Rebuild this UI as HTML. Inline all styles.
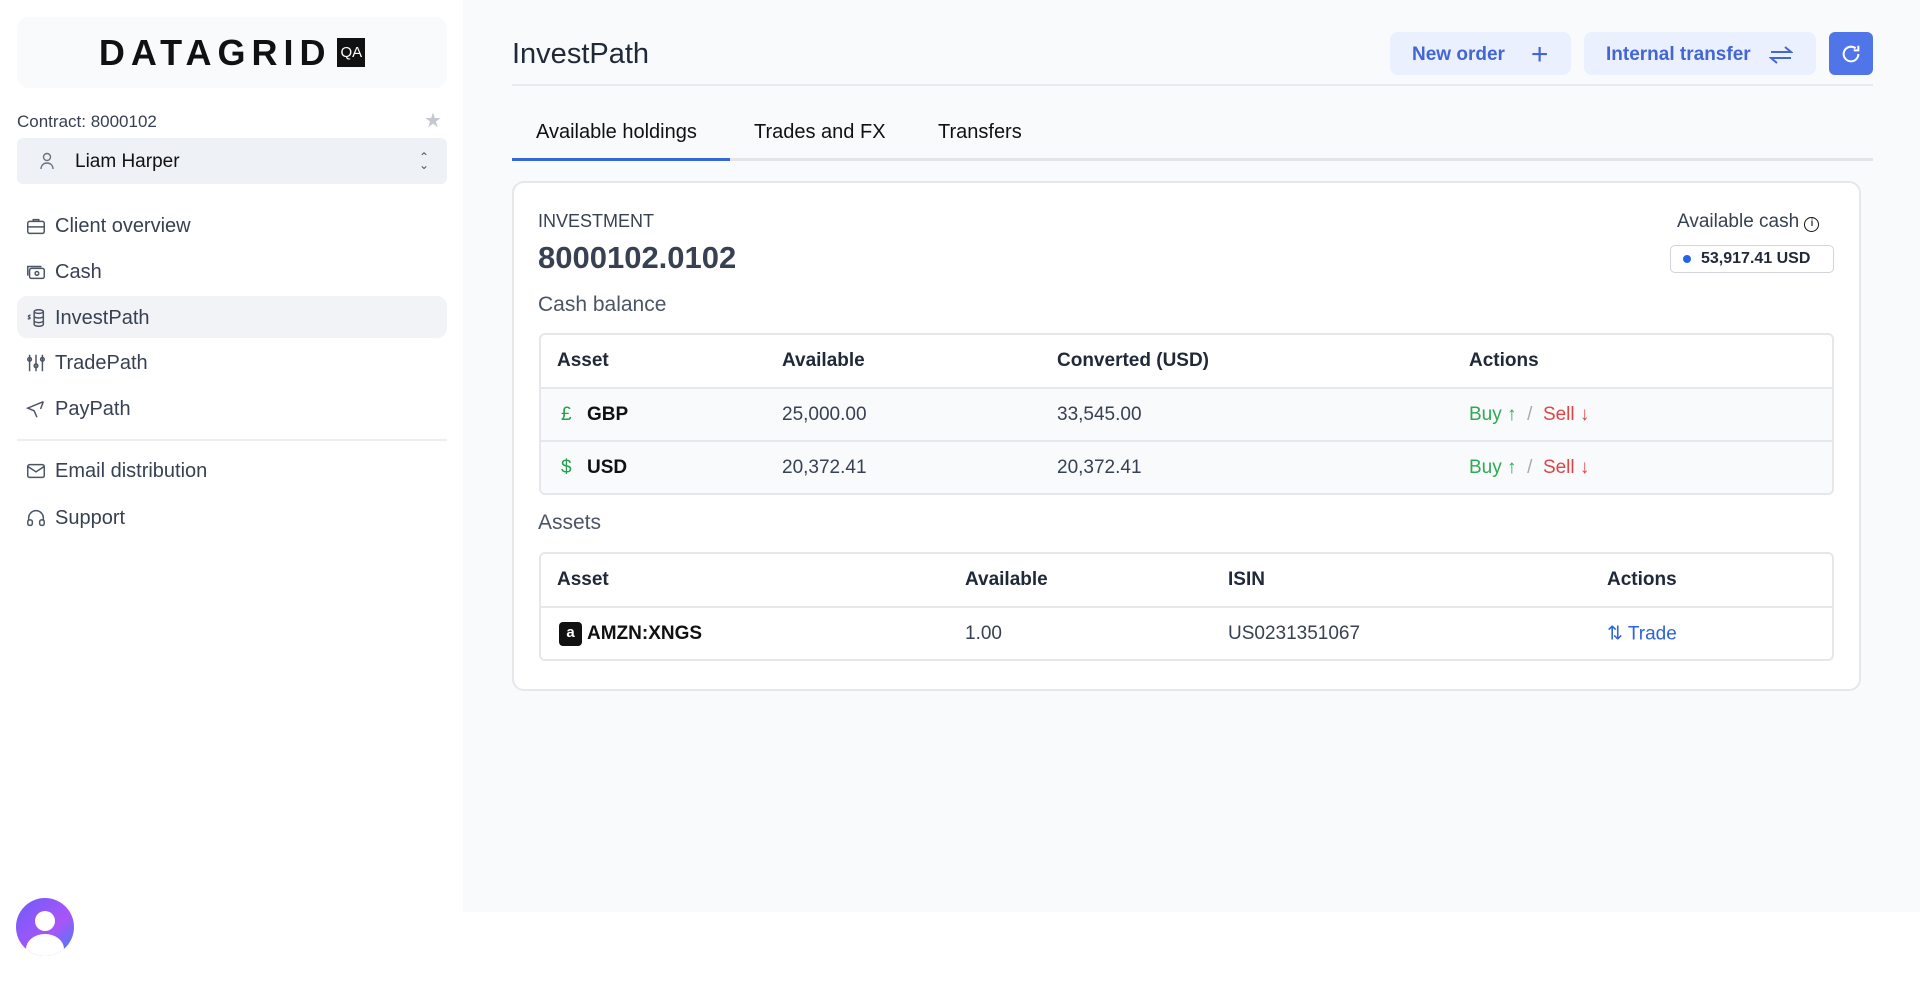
<!DOCTYPE html>
<html><head><meta charset="utf-8"><style>
*{box-sizing:border-box;margin:0;padding:0}
body{width:1920px;height:983px;font-family:"Liberation Sans",sans-serif;background:#fff;position:relative;overflow:hidden;color:#1f2937}
.side{position:absolute;left:0;top:0;width:463px;height:983px;background:#fff}
.main{position:absolute;left:463px;top:0;width:1457px;height:912px;background:#f8fafc}
.abs{position:absolute}
.logo{left:17px;top:17px;width:430px;height:71px;background:#f8fafc;border-radius:12px;display:flex;align-items:center;justify-content:center}
.logo b{font-size:36px;letter-spacing:6px;font-weight:700;color:#111}
.logo span{background:#111;color:#fff;font-size:15px;padding:6px 3px;margin-left:6px}
.nav{left:17px;width:430px;height:42px;display:flex;align-items:center;padding-left:8px;font-size:20px;color:#374151;border-radius:10px;padding-top:2px}
.nav svg{width:22px;height:22px;margin-right:8px;stroke:#4b5563;fill:none;stroke-width:1.6}
.btn{top:32px;height:43px;background:#eaf0fd;border-radius:8px;color:#4466d4;font-size:19px;font-weight:600;display:flex;align-items:center;padding-left:22px;padding-top:2px}
.card{left:512px;top:181px;width:1349px;height:510px;background:#fff;border:2px solid #e5e7eb;border-radius:12px}
.tbl{position:absolute;left:539px;width:1295px;border:2px solid #e5e7eb;border-radius:6px;overflow:hidden;background:#fff}
.row{position:relative;height:53px;border-top:2px solid #e5e7eb;font-size:19px;color:#374151}
.row.h{border-top:none;height:52px;font-weight:600;color:#1f2937}
.row span{position:absolute;top:50%;transform:translateY(-50%)}
.g{background:#f8fafc}
</style></head><body>
<div class="side">
 <div class="abs logo"><b>DATAGRID</b><span>QA</span></div>
 <div class="abs" style="left:17px;top:112px;font-size:17px;color:#374151">Contract: 8000102</div>
 <div class="abs" style="left:424px;top:108px;color:#c4c8ce;font-size:20px">★</div>
 <div class="abs" style="left:17px;top:138px;width:430px;height:46px;background:#eef1f5;border-radius:6px;display:flex;align-items:center;padding-left:22px;font-size:19px;color:#111">
  <svg width="16" height="18" viewBox="0 0 16 18" fill="none" stroke="#6b7280" stroke-width="1.4"><circle cx="8" cy="5" r="3.5"/><path d="M2 17c0-4 3-6 6-6s6 2 6 6"/></svg>
  <span style="margin-left:20px;padding-top:2px">Liam Harper</span>
  <span style="position:absolute;right:18px;color:#4b5563;font-size:12px;line-height:8px;text-align:center">⌃<br>⌄</span></div>
 <div class="abs nav" style="top:204px"><svg viewBox="0 0 24 24"><rect x="3" y="7" width="18" height="13" rx="2"/><path d="M9 7V5h6v2M3 13h18"/></svg>Client overview</div>
 <div class="abs nav" style="top:250px"><svg viewBox="0 0 24 24"><rect x="5" y="8" width="16" height="11" rx="2"/><path d="M3 16V6h15"/><circle cx="13" cy="13.5" r="2"/></svg>Cash</div>
 <div class="abs nav" style="top:296px;background:#f1f3f6"><svg viewBox="0 0 24 24"><ellipse cx="15" cy="5" rx="5" ry="2"/><path d="M10 5v14c0 1 2 2 5 2s5-1 5-2V5M10 10c0 1 2 2 5 2s5-1 5-2M10 15c0 1 2 2 5 2s5-1 5-2M6 9c-2 0-3 1-1.5 2s1.5 2-1.5 2"/></svg>InvestPath</div>
 <div class="abs nav" style="top:341px"><svg viewBox="0 0 24 24"><path d="M5 3v18M12 3v18M19 3v18"/><circle cx="5" cy="8" r="2"/><circle cx="12" cy="15" r="2"/><circle cx="19" cy="8" r="2"/></svg>TradePath</div>
 <div class="abs nav" style="top:387px"><svg viewBox="0 0 24 24"><path d="M20 4L3 11l7 3 3 7M20 4l-3 8"/></svg>PayPath</div>
 <div class="abs" style="left:17px;top:439px;width:430px;height:2px;background:#eceef1"></div>
 <div class="abs nav" style="top:449px"><svg viewBox="0 0 24 24"><rect x="3" y="5" width="18" height="14" rx="2"/><path d="M3 7l9 6 9-6"/></svg>Email distribution</div>
 <div class="abs nav" style="top:496px"><svg viewBox="0 0 24 24"><path d="M4 15v-3a8 8 0 0116 0v3"/><rect x="3" y="14" width="5" height="6" rx="2"/><rect x="16" y="14" width="5" height="6" rx="2"/></svg>Support</div>
 <div class="abs" style="left:16px;top:898px;width:58px;height:58px;border-radius:50%;background:linear-gradient(135deg,#6d5dfc,#a855f7 60%,#3b82f6);overflow:hidden">
  <div style="position:absolute;left:19px;top:13px;width:20px;height:20px;border-radius:50%;background:#fff"></div>
  <div style="position:absolute;left:10px;top:36px;width:38px;height:30px;border-radius:50%;background:#fff"></div></div>
</div>
<div class="main"></div>
<div class="abs" style="left:512px;top:38px;font-size:29px;color:#1f2937">InvestPath</div>
<div class="abs" style="left:512px;top:84px;width:1361px;height:2px;background:#e8eaee"></div>
<div class="abs btn" style="left:1390px;width:181px">New order<span style="margin-left:26px;font-size:30px;font-weight:300">+</span></div>
<div class="abs btn" style="left:1584px;width:232px">Internal transfer<svg style="margin-left:18px" width="24" height="22" viewBox="0 0 24 22" fill="none" stroke="#4466d4" stroke-width="2"><path d="M2 8h20L16 3M22 14H2l6 5"/></svg></div>
<div class="abs" style="left:1829px;top:32px;width:44px;height:43px;background:#4f75e8;border-radius:6px;display:flex;align-items:center;justify-content:center"><svg width="22" height="22" viewBox="0 0 24 24" fill="none" stroke="#fff" stroke-width="2.2"><path d="M20 12a8 8 0 11-3-6.2M20 3v5h-5"/></svg></div>
<div class="abs" style="left:536px;top:121px;font-size:20px;color:#111">Available holdings</div>
<div class="abs" style="left:754px;top:121px;font-size:20px;color:#111">Trades and FX</div>
<div class="abs" style="left:938px;top:121px;font-size:20px;color:#111">Transfers</div>
<div class="abs" style="left:512px;top:158px;width:1361px;height:3px;background:#e2e4e8"></div>
<div class="abs" style="left:512px;top:158px;width:218px;height:3px;background:#3867d6"></div>
<div class="abs card"></div>
<div class="abs" style="left:538px;top:211px;font-size:18px;color:#374151">INVESTMENT</div>
<div class="abs" style="left:538px;top:240px;font-size:31px;font-weight:600;color:#374151">8000102.0102</div>
<div class="abs" style="left:538px;top:293px;font-size:21px;color:#4b5563">Cash balance</div>
<div class="abs" style="left:1677px;top:211px;font-size:19px;color:#374151">Available cash <span style="display:inline-block;width:15px;height:15px;border:1.8px solid #111;border-radius:50%;font-size:10px;text-align:center;line-height:12px;font-weight:700;vertical-align:1px">i</span></div>
<div class="abs" style="left:1670px;top:245px;width:164px;height:28px;border:1.5px solid #d1d5db;border-radius:5px;font-size:16px;font-weight:600;display:flex;align-items:center;padding-left:12px;color:#1f2937"><span style="width:8px;height:8px;border-radius:50%;background:#2563eb;margin-right:10px"></span>53,917.41 USD</div>
<div class="tbl" style="top:333px">
 <div class="row h"><span style="left:16px">Asset</span><span style="left:241px">Available</span><span style="left:516px">Converted (USD)</span><span style="left:928px">Actions</span></div>
 <div class="row g"><span style="left:20px;color:#22a04b">£</span><span style="left:46px;font-weight:700;color:#111">GBP</span><span style="left:241px">25,000.00</span><span style="left:516px">33,545.00</span><span style="left:928px"><span style="position:static;transform:none;color:#2eaa52">Buy ↑</span> <span style="position:static;transform:none;color:#aaa">&nbsp;/&nbsp;</span> <span style="position:static;transform:none;color:#e04545">Sell ↓</span></span></div>
 <div class="row g"><span style="left:20px;color:#22a04b">$</span><span style="left:46px;font-weight:700;color:#111">USD</span><span style="left:241px">20,372.41</span><span style="left:516px">20,372.41</span><span style="left:928px"><span style="position:static;transform:none;color:#2eaa52">Buy ↑</span> <span style="position:static;transform:none;color:#aaa">&nbsp;/&nbsp;</span> <span style="position:static;transform:none;color:#e04545">Sell ↓</span></span></div>
</div>
<div class="abs" style="left:538px;top:511px;font-size:21px;color:#4b5563">Assets</div>
<div class="tbl" style="top:552px">
 <div class="row h"><span style="left:16px">Asset</span><span style="left:424px">Available</span><span style="left:687px">ISIN</span><span style="left:1066px">Actions</span></div>
 <div class="row"><span style="left:18px;width:23px;height:24px;background:#111;border-radius:4px;color:#fff;font-size:15px;text-align:center;line-height:22px;font-weight:700">a</span><span style="left:46px;font-weight:700;color:#111">AMZN:XNGS</span><span style="left:424px">1.00</span><span style="left:687px">US0231351067</span><span style="left:1066px;color:#2f63d8">⇅ Trade</span></div>
</div>
</body></html>
